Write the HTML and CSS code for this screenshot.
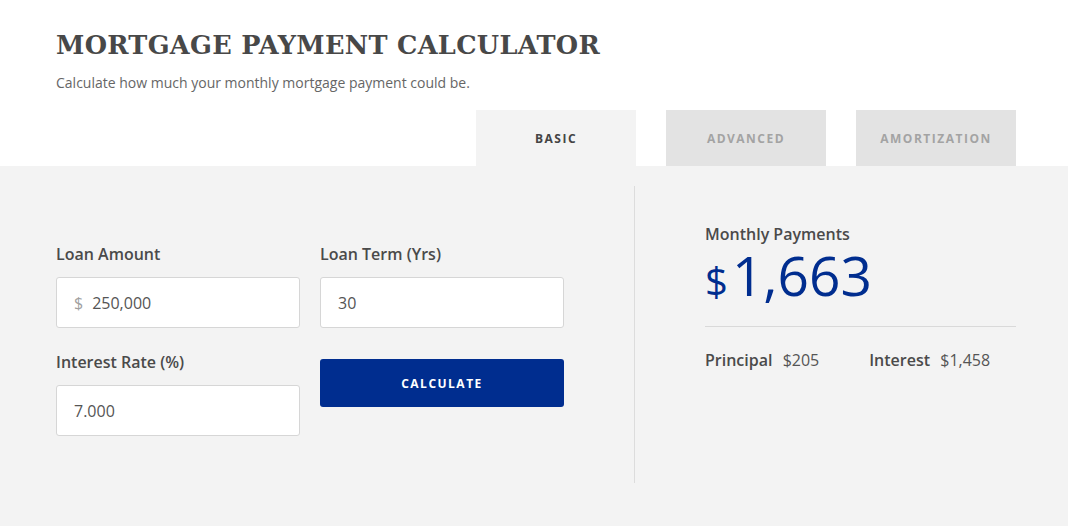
FILE: index.html
```html
<!DOCTYPE html>
<html lang="en">
<head>
  <meta charset="UTF-8" />
  <meta name="viewport" content="width=device-width, initial-scale=1.0" />
  <title>Mortgage Payment Calculator</title>
  <link rel="stylesheet" href="styles.css">
</head>
<body>
  <header class="top">
    <h1 class="calc-title">Mortgage Payment Calculator</h1>
    <p class="calc-sub">Calculate how much your monthly mortgage payment could be.</p>
    <nav class="tabs">
      <div class="tab active">Basic</div>
      <div class="tab">Advanced</div>
      <div class="tab">Amortization</div>
    </nav>
  </header>

  <main class="panel">
    <section class="form">
      <div class="field">
        <label>Loan Amount</label>
        <div class="input"><span class="prefix">$</span>250,000</div>
      </div>
      <div class="field">
        <label>Loan Term (Yrs)</label>
        <div class="input">30</div>
      </div>
      <div class="field">
        <label>Interest Rate (%)</label>
        <div class="input">7.000</div>
      </div>
      <div class="field">
        <button class="calc-btn">Calculate</button>
      </div>
    </section>

    <section class="results">
      <div class="res-label">Monthly Payments</div>
      <div class="res-total"><span class="cur">$</span>1,663</div>
      <div class="res-split">
        <div class="split-item"><b>Principal</b> $205</div>
        <div class="split-item"><b>Interest</b> $1,458</div>
      </div>
    </section>
  </main>
</body>
</html>
```

FILE: styles.css
```css
body {
  margin: 0;
  font-family: "Open Sans", Arial, sans-serif;
  color: #4a4a4a;
  background: #fff;
}
.top {
  padding: 26px 52px 0 56px;
}
.calc-title {
  margin: 0;
  font-family: "DejaVu Serif", serif;
  font-weight: bold;
  font-size: 25.6px;
  line-height: 38px;
  letter-spacing: 0.3px;
  text-transform: uppercase;
  color: #484848;
}
.calc-sub {
  margin: 9px 0 0;
  font-size: 14px;
  line-height: 20px;
  color: #666;
}
.tabs {
  display: flex;
  justify-content: flex-end;
  gap: 30px;
  margin-top: 17px;
}
.tab {
  width: 160px;
  height: 56px;
  display: flex;
  align-items: center;
  justify-content: center;
  background: #e3e3e3;
  color: #a3a3a3;
  font-size: 12px;
  font-weight: bold;
  letter-spacing: 1.5px;
  text-transform: uppercase;
}
.tab.active {
  background: #f3f3f3;
  color: #444;
}
.panel {
  display: flex;
  background: #f3f3f3;
  padding: 20px 52px 43px 56px;
  align-items: flex-start;
}
.form {
  width: 578px;
  height: 240px;
  padding-top: 57px;
  border-right: 1px solid #dcdcdc;
  display: grid;
  grid-template-columns: 244px 244px;
  column-gap: 20px;
  row-gap: 23px;
  align-content: start;
}
.field label {
  display: block;
  font-size: 16px;
  font-weight: 600;
  line-height: 22px;
  margin-bottom: 12px;
}
.input {
  box-sizing: border-box;
  height: 51px;
  border: 1px solid #d6d6d6;
  border-radius: 3px;
  background: #fff;
  padding: 0 17px;
  display: flex;
  align-items: center;
  font-size: 16px;
  color: #555;
}
.prefix {
  color: #a0a0a0;
  margin-right: 9px;
}
.calc-btn {
  margin-top: 8px;
  width: 244px;
  height: 48px;
  border: none;
  border-radius: 3px;
  background: #002d8f;
  color: #fff;
  font-family: "Open Sans", Arial, sans-serif;
  font-size: 12px;
  font-weight: bold;
  letter-spacing: 1.5px;
  text-transform: uppercase;
  cursor: pointer;
}
.results {
  flex: 1;
  padding: 38px 0 0 70px;
}
.res-label {
  font-size: 16px;
  font-weight: 600;
  line-height: 20px;
}
.res-total {
  font-size: 55px;
  line-height: 62px;
  color: #002d8f;
  padding-bottom: 14px;
  border-bottom: 1px solid #d9d9d9;
}
.cur {
  font-size: 40px;
  margin-right: 4px;
}
.res-split {
  display: flex;
  gap: 50px;
  margin-top: 22px;
  font-size: 16px;
  line-height: 22px;
  color: #555;
}
.split-item b {
  font-weight: 600;
  color: #4a4a4a;
  margin-right: 6px;
}
```
